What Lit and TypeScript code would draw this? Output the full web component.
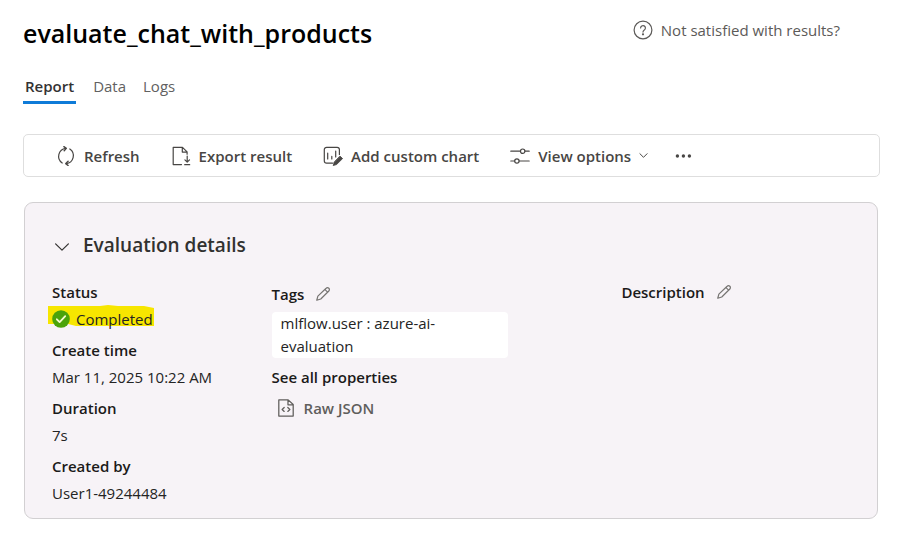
import { LitElement, html, css, svg } from "lit";
import { customElement, state } from "lit/decorators.js";
import { classMap } from "lit/directives/class-map.js";

const icon = (body: unknown, size = 20) => html`<svg
  width=${size} height=${size} viewBox="0 0 20 20" fill="none" stroke="currentColor"
  stroke-width="1.2" stroke-linecap="round" stroke-linejoin="round" aria-hidden="true">${body}</svg>`;

const help = svg`<circle cx="10" cy="10" r="8.9"/><path d="M7.6 8a2.4 2.4 0 1 1 3.7 2c-.9.6-1.3 1-1.3 2.1"/><circle cx="10" cy="14.3" r=".5" fill="currentColor"/>`;
const refresh = svg`<path d="M6.2 17A8 8 0 0 1 9.8 2.4M13.8 3a8 8 0 0 1-3.6 14.6"/><path d="M7.9.6 10.3 2.4 8.2 4.7M12.1 15.3 9.8 17.6l2.3 1.9" stroke-width="1.4"/>`;
const exportFile = svg`<path d="M10.5 18.6H2.2V1.3h9.3l4.6 4.6v2.3M11.3 1.5v4.6h4.6"/><path d="M16.2 10v6M13.9 13.9l2.3 2.3 2.3-2.3M13.7 18.7h5"/>`;
const chart = svg`<path d="M9.5 17.2H3.6A2.3 2.3 0 0 1 1.3 15V3.6a2.3 2.3 0 0 1 2.3-2.3h10.5a2.3 2.3 0 0 1 2.3 2.3v4.8"/><path d="M4.7 7.2v5.8M8.8 10.4V13M12.7 5v6"/><path d="m17.2 10.3 2.4 2.3-6 5.9-3.4 1.1 1-3.4z" fill="currentColor" stroke-width=".8"/>`;
const sliders = svg`<path d="M.8 5.2h9.6M15 5.2h4.2M.8 15h3.8M9.2 15h10"/><circle cx="12.7" cy="5.2" r="2.2"/><circle cx="6.9" cy="15" r="2.2"/>`;
const chevron = svg`<path d="m2 6 8 8 8-8" stroke-width="1.5"/>`;
const smallChevron = svg`<path d="m2 6 8 8 8-8" stroke-width="2.2"/>`;
const dots = svg`<g fill="currentColor" stroke="none"><circle cx="3.4" cy="10" r="1.7"/><circle cx="9.4" cy="10" r="1.7"/><circle cx="15.4" cy="10" r="1.7"/></g>`;
const pencil = svg`<path d="M2.2 17.8 3.6 12.6 13.9 2.8a2.4 2.4 0 0 1 3.4 3.4L7.2 16.2zM12.3 4.3l3.4 3.4" stroke-width="1.5"/>`;
const json = svg`<path d="M2 1h10.4L18 6.2V19H2zM12.2 1.2v5.2h5.6M8 9.4l-2.3 2.2L8 13.8M12 9.4l2.3 2.2-2.3 2.2" stroke-width="1.4"/>`;
const check = svg`<circle cx="10" cy="10" r="9.8" fill="#4ba30b" stroke="none"/><path d="m5.4 10.3 3.1 3.2 6.2-6.6" stroke="#f6fbd0" stroke-width="2"/>`;

@customElement("app-root")
export class AppRoot extends LitElement {
  @state() private tab = "Report";
  @state() private open = true;

  static styles = css`
    :host {
      display: block;
      box-sizing: border-box;
      padding: 12px 23px 38px;
      background: #fff;
      color: #242424;
      font-family: "Open Sans", "Noto Sans", sans-serif;
      font-size: 15px;
      line-height: 24px;
    }
    * { box-sizing: border-box; }
    svg { flex: none; display: block; }
    h1, h2, h3, dl, dd, p { margin: 0; }
    button {
      display: inline-flex;
      align-items: center;
      padding: 0;
      border: 0;
      background: none;
      color: #484644;
      font: inherit;
      cursor: pointer;
    }
    .top { display: flex; justify-content: space-between; padding-right: 40px; }
    h1 { font-size: 25px; line-height: 42px; font-weight: 600; color: #000; }
    .help {
      display: flex;
      align-items: center;
      gap: 8px;
      height: 36px;
      color: #5c5a58;
      text-decoration: none;
    }
    .tabs { display: flex; gap: 17px; margin-top: 20px; }
    .tab { padding: 0 0 3px; border-bottom: 3px solid transparent; color: #616161; }
    .tab.on { padding: 0 2px 3px; border-color: #0f7bd8; color: #333; font-weight: 600; }
    .bar {
      display: flex;
      align-items: center;
      gap: 31px;
      height: 43px;
      margin-top: 30px;
      padding: 0 32px;
      border: 1px solid #dedede;
      border-radius: 5px;
    }
    .bar button { gap: 8px; font-weight: 600; }
    .bar .more { margin-left: -5px; }
    .card {
      margin: 25px 2px 0 1px;
      padding: 28px 27px 13px;
      border: 1px solid #d2d0d2;
      border-radius: 9px;
      background: #f7f3f7;
    }
    h2 { font-size: 19px; line-height: 28px; font-weight: 600; }
    h2 button { gap: 13px; padding-left: 2px; color: #323130; }
    h2 svg { margin-top: 3px; }
    .cols { display: grid; grid-template-columns: 219fr 349fr 228fr; margin-top: 18px; }
    .facts { display: grid; gap: 7px; align-content: start; }
    dt, h3 { font-size: 15px; font-weight: 600; color: #1b1a19; }
    dd { margin-top: 3px; }
    .status { position: relative; display: flex; width: fit-content; align-items: center; gap: 6px; isolation: isolate; }
    .mark { position: absolute; z-index: -1; left: -4px; top: -2px; width: 107px; height: 22px; }
    .title { display: flex; align-items: center; gap: 11px; }
    .title button { color: #767472; }
    .tags { padding-top: 2px; }
    .tag {
      width: 236px;
      max-width: 100%;
      margin: 6px 0 7px;
      padding: 0 9px;
      border-radius: 4px;
      background: #fff;
      line-height: 23px;
    }
    .raw { gap: 9px; margin: 7px 0 0 5px; font-weight: 600; color: #605e5c; }
  `;

  private fact(name: string, value: unknown) {
    return html`<div><dt>${name}</dt><dd>${value}</dd></div>`;
  }

  private details() {
    return html`<div class="cols">
      <dl class="facts">
        ${this.fact("Status", html`<span class="status">
          <svg class="mark" viewBox="0 0 107 22" preserveAspectRatio="none" aria-hidden="true">
            <path d="M0 1 52 1 60 0 70 1 96 1 106 3V21H28L20 19H0z" fill="#f7e600"/></svg>
          ${icon(check, 18)}Completed</span>`)}
        ${this.fact("Create time", "Mar 11, 2025 10:22 AM")}
        ${this.fact("Duration", "7s")}
        ${this.fact("Created by", "User1-49244484")}
      </dl>
      <section class="tags">
        <div class="title"><h3>Tags</h3><button aria-label="Edit tags">${icon(pencil, 16)}</button></div>
        <p class="tag">mlflow.user : azure-ai-evaluation</p>
        <h3>See all properties</h3>
        <button class="raw">${icon(json, 18)}Raw JSON</button>
      </section>
      <section>
        <div class="title"><h3>Description</h3><button aria-label="Edit description">${icon(pencil, 16)}</button></div>
      </section>
    </div>`;
  }

  render() {
    return html`
      <header class="top">
        <h1>evaluate_chat_with_products</h1>
        <a class="help" href="#help">${icon(help)}Not satisfied with results?</a>
      </header>
      <nav class="tabs" role="tablist">
        ${["Report", "Data", "Logs"].map((t) => html`<button role="tab"
          class=${classMap({ tab: true, on: t === this.tab })}
          aria-selected=${t === this.tab} @click=${() => (this.tab = t)}>${t}</button>`)}
      </nav>
      <div class="bar" role="toolbar">
        <button>${icon(refresh)}Refresh</button>
        <button>${icon(exportFile)}Export result</button>
        <button>${icon(chart)}Add custom chart</button>
        <button>${icon(sliders)}View options${icon(smallChevron, 9)}</button>
        <button class="more" aria-label="More">${icon(dots)}</button>
      </div>
      <section class="card">
        <h2><button aria-expanded=${this.open} @click=${() => (this.open = !this.open)}>${icon(chevron, 16)}Evaluation details</button></h2>
        ${this.open ? this.details() : null}
      </section>`;
  }
}
